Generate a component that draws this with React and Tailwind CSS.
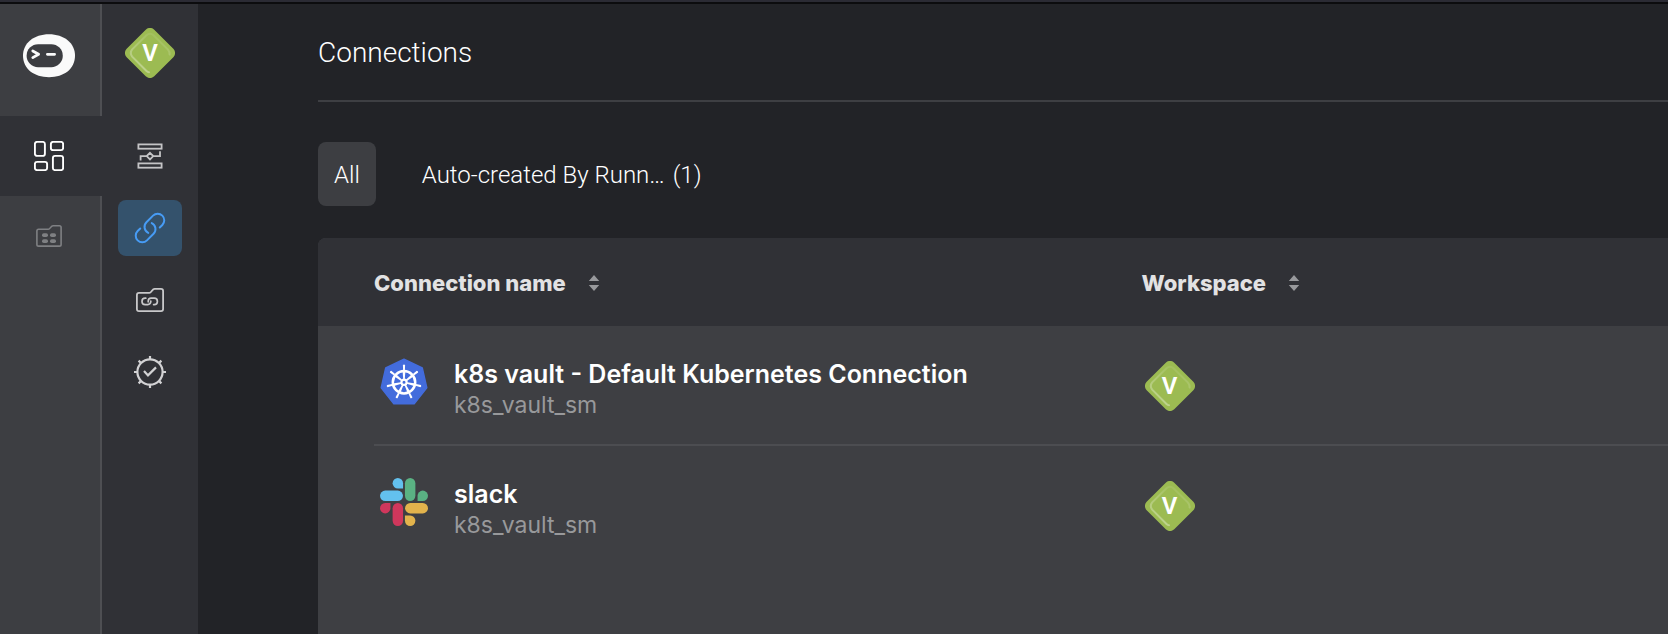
import { useId } from "react";

function RobotLogo() {
  return (
    <svg width="52" height="44" viewBox="0 0 52 44" fill="none" aria-hidden="true">
      <path d="M26 0.3C41 0.3 52 9 52 21.6C52 35 41 43.3 26 43.3C11 43.3 0 35 0 21.6C0 9 11 0.3 26 0.3Z" fill="#fafafa" />
      <rect x="3.6" y="10.2" width="36.2" height="23" rx="11.5" fill="#3c3d41" />
      <path d="M9.8 17L15.6 20.2L9.8 23.6M24.4 20.3H31.6" stroke="#fafafa" strokeWidth="2.8" strokeLinecap="round" strokeLinejoin="round" />
    </svg>
  );
}

function DashboardIcon() {
  return (
    <svg width="30" height="30" viewBox="0 0 30 30" fill="none" stroke="#fff" strokeWidth="1.9" aria-hidden="true">
      <rect x="0.9" y="0.9" width="10" height="14" rx="2.2" />
      <rect x="16.9" y="0.9" width="12.2" height="8.2" rx="2.2" />
      <rect x="0.9" y="20.9" width="12.2" height="8.2" rx="2.2" />
      <rect x="18.9" y="14.9" width="10.2" height="14.2" rx="2.2" />
    </svg>
  );
}

function FolderAppsIcon() {
  return (
    <svg width="26" height="22" viewBox="0 0 26 22" aria-hidden="true">
      <path d="M2.6 4.2H12.4C14.2 4.2 14.8 0.8 17 0.8H23.4Q25.1 0.8 25.1 2.5V19.4Q25.1 21.1 23.4 21.1H2.6Q0.9 21.1 0.9 19.4V5.9Q0.9 4.2 2.6 4.2Z" fill="none" stroke="#7f8083" strokeWidth="1.6" />
      <g fill="#7f8083">
        <rect x="6" y="8.2" width="6" height="3.8" rx="1.8" />
        <rect x="14" y="8.2" width="6" height="3.8" rx="1.8" />
        <rect x="6" y="14.2" width="6" height="3.8" rx="1.8" />
        <rect x="14" y="14.2" width="6" height="3.8" rx="1.8" />
      </g>
    </svg>
  );
}

function FlowIcon() {
  return (
    <svg width="26" height="26" viewBox="0 0 26 26" fill="none" stroke="#c4c4c6" strokeWidth="1.8" aria-hidden="true">
      <rect x="1.4" y="1.4" width="23.2" height="4.3" />
      <rect x="1.4" y="20.4" width="23.2" height="4.3" />
      <path d="M13 9.8L16.3 13.1L13 16.4L9.7 13.1ZM16.3 13.1H23V8.2M9.7 13.1H3.6V17.6" />
    </svg>
  );
}

function LinkIcon() {
  return (
    <svg width="36" height="36" viewBox="-0.3 -0.3 24.6 24.6" fill="none" stroke="#479cf5" strokeWidth="1.35" strokeLinecap="round" strokeLinejoin="round" aria-hidden="true">
      <path d="M13.19 8.688a4.5 4.5 0 0 1 1.242 7.244l-4.5 4.5a4.5 4.5 0 0 1-6.364-6.364l1.757-1.757m13.35-.622 1.757-1.757a4.5 4.5 0 0 0-6.364-6.364l-4.5 4.5a4.5 4.5 0 0 0 1.242 7.244" />
    </svg>
  );
}

function FolderLinkIcon() {
  return (
    <svg width="28" height="24" viewBox="0 0 28 24" fill="none" stroke="#c8c8ca" strokeWidth="1.8" aria-hidden="true">
      <path d="M3 4.9H13.4C15.4 4.9 16.2 0.9 18.6 0.9H25Q27.1 0.9 27.1 3V21Q27.1 23.1 25 23.1H3Q0.9 23.1 0.9 21V7Q0.9 4.9 3 4.9Z" />
      <path d="M9.8 10.2H9.2a3.2 3.2 0 0 0 0 6.4H11.8a3 3 0 0 0 3-3V13M17.6 16.6H18.2a3.2 3.2 0 0 0 0-6.4H15.2a3 3 0 0 0-3 3V13.8" strokeLinecap="round" strokeWidth="1.7" />
    </svg>
  );
}

function BadgeCheckIcon() {
  return (
    <svg width="32" height="32" viewBox="-16 -16 32 32" fill="none" stroke="#d2d2d4" strokeWidth="2.2" aria-hidden="true">
      <circle r="12.6" />
      <path d="M0 -12.6V-16M0 12.6V16M-12.6 0H-16M12.6 0H16M8.9 -8.9L11.4 -11.4M-8.9 -8.9L-11.4 -11.4M8.9 8.9L11.4 11.4M-8.9 8.9L-11.4 11.4" />
      <path d="M-6 -1L-2 3.4L6 -4.6" />
    </svg>
  );
}

function WorkspaceBadge() {
  const id = useId();
  return (
    <span className="grid size-[50px] place-items-center">
      <svg className="[grid-area:1/1]" width="50" height="50" viewBox="-25 -25 50 50" fill="none" aria-hidden="true">
        <defs>
          <linearGradient id={id} x1="0" y1="1" x2="0.5" y2="0">
            <stop offset="0" stopColor="#fff" stopOpacity="0.4" />
            <stop offset="1" stopColor="#fff" stopOpacity="0.08" />
          </linearGradient>
        </defs>
        <rect x="-19.5" y="-19.5" width="39" height="39" rx="6" fill="#9cbb52" transform="rotate(45)" />
        <path d="M-1 19.2Q-2.3 19.2 -3.5 18L-17.8 3.6Q-20.6 0 -17.8 -3.6L-3.6 -17.8Q0 -20.8 3.6 -17.8L17.8 -3.6Q20 -1 19.6 1.5" stroke={`url(#${id})`} strokeWidth="2" strokeLinecap="round" />
      </svg>
      <span className="[grid-area:1/1] font-[Roboto,sans-serif] text-2xl leading-none font-semibold text-white">V</span>
    </span>
  );
}

const WHEEL_ANGLES = [0, 1, 2, 3, 4, 5, 6].map((n) => (n * 360) / 7);

function KubernetesIcon() {
  return (
    <svg width="48" height="48" viewBox="-24 -24 48 48" aria-hidden="true">
      <path d="M0 -22.8L18.3 -14L22.8 5.7L10.2 21.7H-10.2L-22.8 5.7L-18.3 -14Z" fill="#436cdc" stroke="#436cdc" strokeWidth="1.4" strokeLinejoin="round" />
      <circle r="11.2" cy="0.3" fill="none" stroke="#fff" strokeWidth="2.5" />
      {WHEEL_ANGLES.map((a) => (
        <g key={a} transform={`translate(0 0.3) rotate(${a})`} fill="#fff">
          <path d="M-0.8 -3L-1.4 -11.5H1.4L0.8 -3Z" />
          <path d="M-0.9 -12L-1.1 -17.2Q0 -18.2 1.1 -17.2L0.9 -12Z" />
        </g>
      ))}
      <circle r="2.6" cy="0.3" fill="none" stroke="#fff" strokeWidth="2.2" />
    </svg>
  );
}

const SLACK_ARMS = [
  ["#63c1ee", 0],
  ["#5ab283", 90],
  ["#e2b34c", 180],
  ["#cf375c", 270],
];

function SlackIcon() {
  return (
    <svg width="48" height="48" viewBox="0 0 48.7 48.7" aria-hidden="true">
      {SLACK_ARMS.map(([color, angle]) => (
        <g key={color} fill={color} transform={`rotate(${angle} 24.35 24.35)`}>
          <path d="M18.1 0a5.3 5.3 0 0 0 0 10.6H23.4V5.3A5.3 5.3 0 0 0 18.1 0Z" />
          <rect x="0" y="12.8" width="23.3" height="10.6" rx="5.3" />
        </g>
      ))}
    </svg>
  );
}

function SortHeader({ children }) {
  return (
    <button type="button" className="flex items-center gap-[22px] text-[22px] leading-7 font-extrabold text-[#e2e2e3]">
      {children}
      <svg width="12" height="16" viewBox="0 0 12 16" fill="#98999c" aria-hidden="true">
        <path d="M6 0L11.2 6H0.8ZM6 16L0.8 10H11.2Z" />
      </svg>
    </button>
  );
}

const RAIL = [
  { label: "Automation", Icon: FlowIcon },
  { label: "Connections", Icon: LinkIcon, active: true },
  { label: "Connection groups", Icon: FolderLinkIcon },
  { label: "Status", Icon: BadgeCheckIcon },
];

const CONNECTIONS = [
  { name: "k8s vault - Default Kubernetes Connection", source: "k8s_vault_sm", Icon: KubernetesIcon },
  { name: "slack", source: "k8s_vault_sm", Icon: SlackIcon },
];

export default function App() {
  return (
    <div className="flex min-h-screen flex-col bg-[#222327] font-[Roboto,sans-serif] text-white">
      <div className="h-1 border-b-2 border-[#0c0c0e] bg-[#2b2b34]" />
      <div className="flex flex-1">
        <nav aria-label="Main" className="flex w-[102px] shrink-0 flex-col bg-[#303136]">
          <a href="#home" aria-label="Home" className="flex h-28 items-center justify-center border-r-2 border-[#4e4f53] bg-[#3d3e42] pr-0.5 pb-2">
            <RobotLogo />
          </a>
          <a href="#workspaces" aria-label="Workspaces" className="flex h-20 items-center justify-center pr-1">
            <DashboardIcon />
          </a>
          <div className="flex-1 border-r-2 border-[#4e4f53] bg-[#3d3e42]">
            <a href="#collections" aria-label="Collections" className="flex h-20 items-center justify-center pr-0.5">
              <FolderAppsIcon />
            </a>
          </div>
        </nav>

        <nav aria-label="Workspace" className="flex w-24 shrink-0 flex-col items-center bg-[#303136] pt-6">
          <a href="#workspace" aria-label="Workspace V">
            <WorkspaceBadge />
          </a>
          <ul className="flex flex-col gap-4 pt-[50px]">
            {RAIL.map(({ label, Icon, active }) => (
              <li key={label}>
                <a href="#nav" aria-label={label} className={`flex h-14 w-16 items-center justify-center rounded-lg ${active ? "bg-[#34526c]" : ""}`}>
                  <Icon />
                </a>
              </li>
            ))}
          </ul>
        </nav>

        <main className="flex min-w-0 flex-1 flex-col pl-[120px]">
          <header className="flex h-[98px] items-center border-b-2 border-[#3e3f43] pt-0.5">
            <h1 className="text-[28px] leading-9 font-[350]">Connections</h1>
          </header>

          <div className="flex items-center gap-[46px] pt-10 pb-8 text-2xl font-[350]">
            <button type="button" className="h-16 rounded-lg bg-[#3d3e42] px-4 pt-0.5">All</button>
            <button type="button" className="flex h-16 items-center gap-2 pt-0.5">
              <span>Auto-created By Runn…</span>
              <span>(1)</span>
            </button>
          </div>

          <section className="flex-1 overflow-hidden rounded-tl-lg bg-[#3e3f43]">
            <table className="w-full table-fixed border-collapse text-left font-[Inter,sans-serif]">
              <thead>
                <tr className="h-[88px] bg-[#303136]">
                  <th className="w-[61%] p-0 pt-0.5 pl-14"><SortHeader>Connection name</SortHeader></th>
                  <th className="p-0 pt-0.5"><SortHeader>Workspace</SortHeader></th>
                </tr>
              </thead>
              <tbody>
                {CONNECTIONS.map(({ name, source, Icon }) => (
                  <tr key={name} className="[&:not(:last-child)_.cell]:border-[#4c4d51]">
                    <td className="p-0 pl-14">
                      <div className="cell flex h-[120px] gap-5 border-b-2 border-transparent pt-[26px]">
                        <span className="flex size-[60px] items-center justify-center"><Icon /></span>
                        <div className="pt-2">
                          <p className="mb-0.5 text-[25px] leading-7 font-semibold">{name}</p>
                          <p className="text-[23px] leading-[30px] text-[#98999b]">{source}</p>
                        </div>
                      </div>
                    </td>
                    <td className="p-0">
                      <div className="cell flex h-[120px] items-center border-b-2 border-transparent pt-0.5 pl-[3px]">
                        <WorkspaceBadge />
                      </div>
                    </td>
                  </tr>
                ))}
              </tbody>
            </table>
          </section>
        </main>
      </div>
    </div>
  );
}
